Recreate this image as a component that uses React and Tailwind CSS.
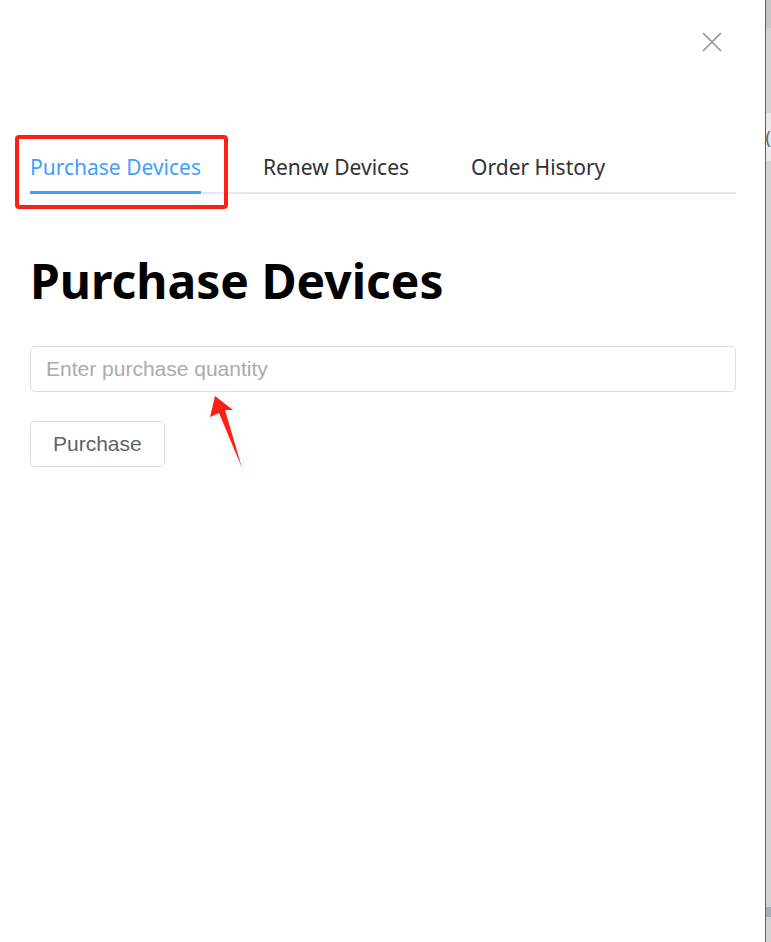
import React, { useState } from 'react';

const tabs = ['Purchase Devices', 'Renew Devices', 'Order History'];

const App = () => {
    const [active, setActive] = useState(0);
    const [qty, setQty] = useState('');

    return (
        <div className="flex h-[942px] w-[771px] overflow-hidden bg-white">
            {/* drawer */}
            <div className="relative h-full w-[766px] pl-[30px] pr-[29px]">
                <div className="flex justify-end pt-[32px] pr-[14px]">
                    <button className="text-[#909399]">
                        <svg width="20" height="20" viewBox="0 0 20 20" fill="none" stroke="currentColor" strokeWidth="1.6">
                            <path d="M1 1L19 19M19 1L1 19" />
                        </svg>
                    </button>
                </div>

                <div className="mt-[95px] flex gap-[62px] border-b-2 border-[#e4e7ed]" style={{ fontFamily: '"Noto Sans", sans-serif' }}>
                    {tabs.map((tab, i) => (
                        <button
                            key={tab}
                            onClick={() => setActive(i)}
                            className={`-mb-[2px] border-b-[3px] pb-[4px] text-[21px] leading-[40px] ${active === i ? 'border-[#409eff] text-[#409eff]' : 'border-transparent text-[#303133]'}`}
                        >
                            {tab}
                        </button>
                    ))}
                </div>

                <h1 className="mt-[58px] text-[48px] font-bold leading-[58px] text-black" style={{ fontFamily: '"Noto Sans", sans-serif' }}>
                    Purchase Devices
                </h1>

                <div style={{ fontFamily: '"Liberation Sans", Arial, sans-serif' }}>
                    <input
                        value={qty}
                        onChange={(e) => setQty(e.target.value)}
                        placeholder="Enter purchase quantity"
                        className="mt-[36px] block h-[46px] w-full rounded-[5px] border border-[#dcdfe6] px-[15px] text-[21px] text-[#606266] outline-none placeholder:text-[#a8abb2]"
                    />
                    <button className="mt-[29px] h-[46px] rounded-[5px] border border-[#dcdfe6] px-[22px] text-[21px] text-[#606266]">
                        Purchase
                    </button>
                </div>

                {/* annotation: red box + arrow */}
                <div className="absolute left-[15px] top-[135px] h-[74px] w-[213px] rounded-[4px] border-[4px] border-[#fe2016]" />
                <svg className="absolute left-0 top-0" width="300" height="500" viewBox="0 0 300 500">
                    <polygon points="215,396 233,410 225,410 242,468 219,413 210,417" fill="#fe2016" />
                </svg>
            </div>

            <div className="w-px bg-[#5f5f5f]" />
            <div className="flex flex-1 flex-col bg-[#d2d2d2]">
                <div className="h-[28px] bg-[#c6c6c6]" />
                <div className="h-[85px]" />
                <div className="flex h-[48px] items-center bg-[#e9e9e9] text-[18px] leading-none text-[#666]">(</div>
                <div className="flex-1" />
                <div className="h-[10px] bg-[#a9adb4]" />
                <div className="h-[25px]" />
            </div>
        </div>
    );
};

export default App;
